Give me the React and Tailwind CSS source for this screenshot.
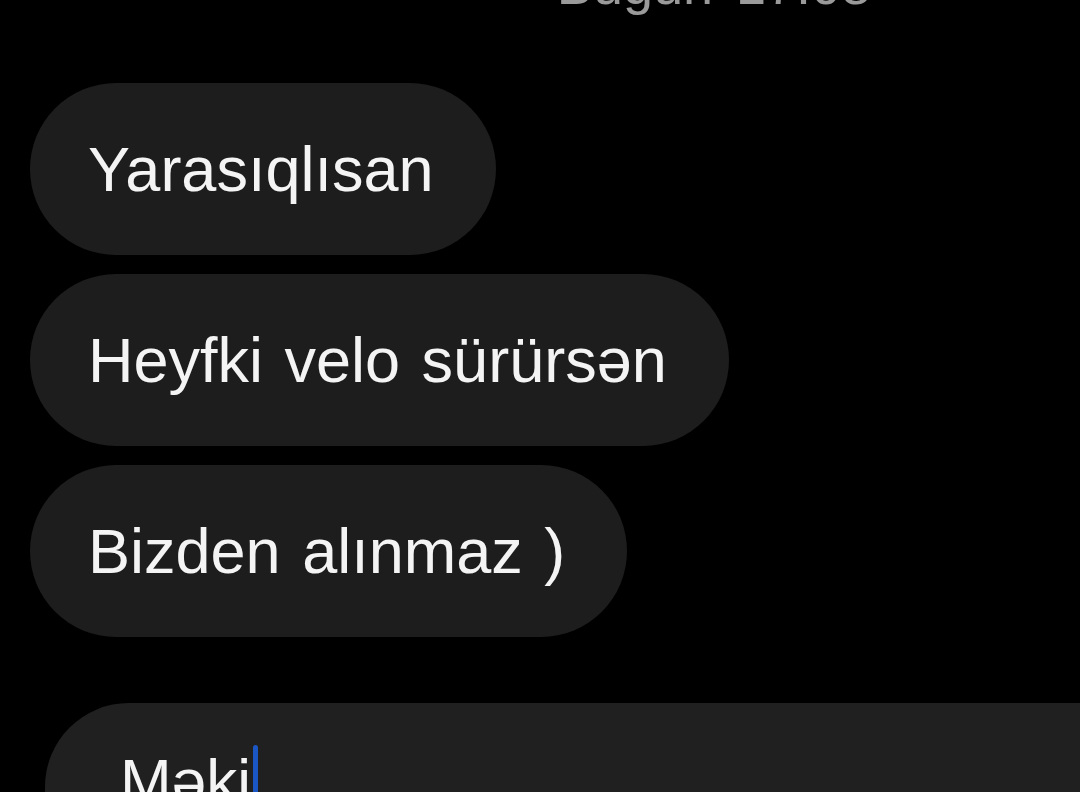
export default function App() {
  const messages = ["Yarasıqlısan", "Heyfki velo sürürsən", "Bizden alınmaz )"];

  return (
    <div
      className="w-[1080px] h-[792px] bg-black overflow-hidden flex flex-col"
      style={{ fontFamily: "'Liberation Sans', Arial, sans-serif" }}
    >
      {/* date stamp, mostly scrolled off */}
      <div className="h-[40px] shrink-0 flex justify-center pl-[348px]">
        <span className="text-[54px] leading-none text-[#9a9a9a] -mt-[42px] [word-spacing:8px]">Bugün 17:08</span>
      </div>

      {/* received messages */}
      <div className="shrink-0 flex flex-col items-start gap-[19px] pl-[30px] mt-[43px]">
        {messages.map((m) => (
          <div
            key={m}
            className="h-[172px] rounded-full bg-[#1d1d1d] flex items-center pl-[58px] pr-[62px] text-[63px] leading-none text-[#f4f4f4] [word-spacing:4px]"
          >
            {m}
          </div>
        ))}
      </div>

      {/* input */}
      <div className="mt-[66px] ml-[45px] flex-1 min-h-0 overflow-hidden bg-[#202020] rounded-tl-[84px] pl-[75px] pt-[42px]">
        <div className="flex items-start text-[62px] leading-none text-[#f4f4f4]">
          <span className="mt-[5px]">Məki</span>
          <span className="w-[5px] h-[60px] bg-[#1b57c4] rounded-full ml-[2px]" />
        </div>
      </div>
    </div>
  );
}
